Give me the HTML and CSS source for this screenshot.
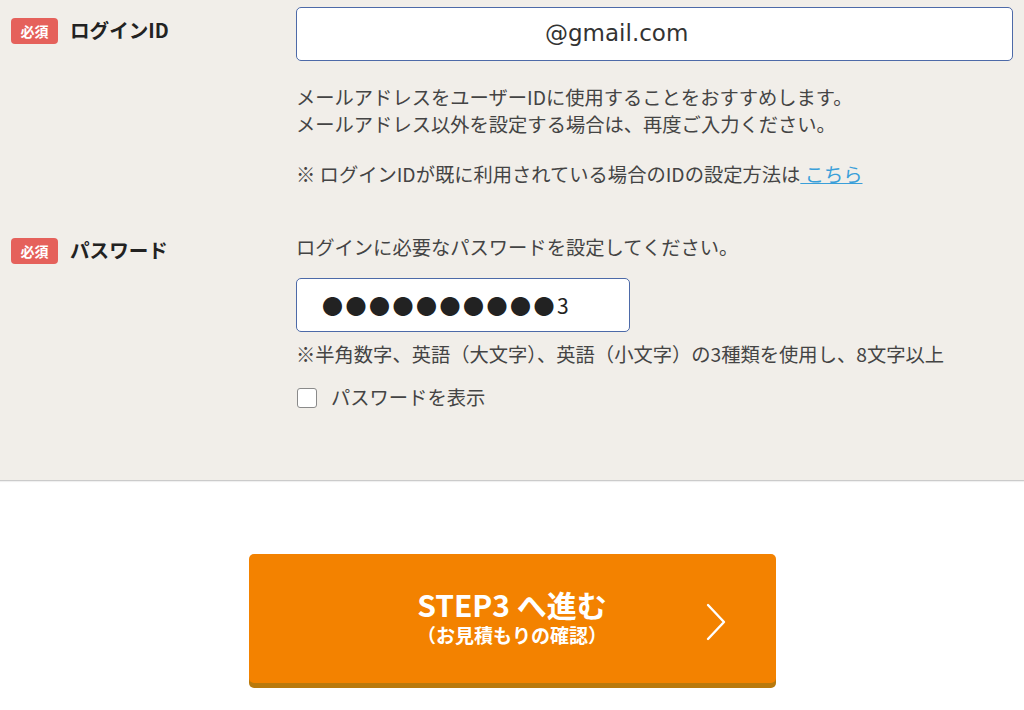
FILE: index.html
```html
<!DOCTYPE html>
<html lang="ja">
<head>
  <meta charset="UTF-8" />
  <meta name="viewport" content="width=device-width, initial-scale=1.0"/>
  <title>STEP2 - ログイン情報の設定</title>
  <link rel="stylesheet" href="styles.css">
</head>
<body>
  <!-- Login settings form -->
  <section class="form-area">
    <div class="form-row">
      <div class="form-label">
        <span class="req-badge">必須</span>
        <span class="label-text">ログインID</span>
      </div>
      <div class="form-body">
        <input type="text" class="text-input email-input" value="@gmail.com">
        <p class="help">メールアドレスをユーザーIDに使用することをおすすめします。<br>メールアドレス以外を設定する場合は、再度ご入力ください。</p>
        <p class="help note">※ ログインIDが既に利用されている場合のIDの設定方法は<a href="#"> こちら</a></p>
      </div>
    </div>

    <div class="form-row row-password">
      <div class="form-label">
        <span class="req-badge">必須</span>
        <span class="label-text">パスワード</span>
      </div>
      <div class="form-body">
        <p class="help lead">ログインに必要なパスワードを設定してください。</p>
        <input type="text" class="text-input pass-input" value="●●●●●●●●●●3">
        <p class="help rule">※半角数字、英語（大文字）、英語（小文字）の3種類を使用し、8文字以上</p>
        <label class="show-pass">
          <input type="checkbox" class="check">
          <span>パスワードを表示</span>
        </label>
      </div>
    </div>
  </section>

  <!-- Next step button -->
  <div class="actions">
    <a href="#" class="next-btn">
      <span class="next-main">STEP3 へ進む</span>
      <span class="next-sub">（お見積もりの確認）</span>
      <svg class="next-arrow" width="20" height="38" viewBox="0 0 20 38">
        <path d="M2 2 L18 19 L2 36" fill="none" stroke="#fff" stroke-width="2.4" stroke-linecap="round" stroke-linejoin="round"/>
      </svg>
    </a>
  </div>
</body>
</html>
```

FILE: styles.css
```css
/* Base */
body {
  margin: 0;
  background-color: #fff;
  color: #333;
  font-family: "Noto Sans CJK JP", sans-serif;
}
p {
  margin: 0;
}

/* Form area */
.form-area {
  background-color: #f1eee9;
  border-bottom: 1px solid #cbcbcb;
  box-shadow: 0 1px 1px rgba(0, 0, 0, 0.06);
  padding: 7px 11px 69px 11px;
}
.form-row {
  display: flex;
}
.row-password {
  margin-top: 46px;
}
.form-label {
  width: 285px;
  flex-shrink: 0;
  display: flex;
  align-items: center;
  gap: 12px;
  height: 26px;
  margin-top: 11px;
}
.row-password .form-label {
  margin-top: 4px;
}
.req-badge {
  display: inline-block;
  width: 47px;
  height: 26px;
  line-height: 26px;
  text-align: center;
  background-color: #e5615b;
  color: #fff;
  border-radius: 4px;
  font-size: 14px;
  font-weight: bold;
}
.label-text {
  font-size: 19.6px;
  line-height: 22px;
  margin-top: -3px;
  font-weight: bold;
  color: #222;
}
.form-body {
  flex: 1;
}

/* Inputs */
.text-input {
  display: block;
  box-sizing: border-box;
  height: 54px;
  margin: 0;
  border: 1px solid #4d6aa8;
  border-radius: 5px;
  background-color: #fff;
  color: #333;
  font-family: "DejaVu Sans", "Noto Sans CJK JP", sans-serif;
  font-size: 23px;
  outline: none;
}
.email-input {
  width: 100%;
  padding: 0 0 2px 248px;
}
.pass-input {
  width: 334px;
  padding: 0 0 0 25px;
  font-family: "Noto Sans CJK JP", sans-serif;
  font-size: 21px;
  letter-spacing: 2.5px;
  color: #222;
}

/* Help texts */
.help {
  font-size: 19.3px;
  line-height: 27px;
  color: #444;
}
.form-body .text-input + .help {
  margin-top: 23px;
}
.help.note {
  margin-top: 23px;
}
.help a {
  color: #3a9fd9;
  text-decoration: underline;
}
.help.lead {
  margin-bottom: 17px;
}
.form-body .pass-input + .help.rule {
  margin-top: 9px;
}

/* Show password checkbox */
.show-pass {
  display: flex;
  align-items: center;
  gap: 14px;
  margin-top: 16px;
  font-size: 19.3px;
  line-height: 27px;
  color: #444;
}
.check {
  appearance: none;
  -webkit-appearance: none;
  width: 20px;
  height: 20px;
  margin: 1px 0 0 1px;
  border: 1px solid #8a8a8a;
  border-radius: 3px;
  background-color: #fff;
}

/* Next button */
.actions {
  display: flex;
  justify-content: center;
  padding-top: 73px;
  padding-bottom: 30px;
}
.next-btn {
  position: relative;
  width: 527px;
  height: 129px;
  background-color: #f38200;
  border-radius: 5px;
  box-shadow: 0 5px 0 #b9790c;
  color: #fff;
  text-decoration: none;
  display: flex;
  flex-direction: column;
  align-items: center;
  justify-content: center;
  font-weight: bold;
}
.next-main {
  display: block;
  font-size: 30px;
  line-height: 32px;
  margin-top: -2px;
}
.next-sub {
  display: block;
  font-size: 19px;
  line-height: 24px;
  margin-top: 3px;
}
.next-arrow {
  position: absolute;
  right: 50px;
  top: 49px;
}
```
